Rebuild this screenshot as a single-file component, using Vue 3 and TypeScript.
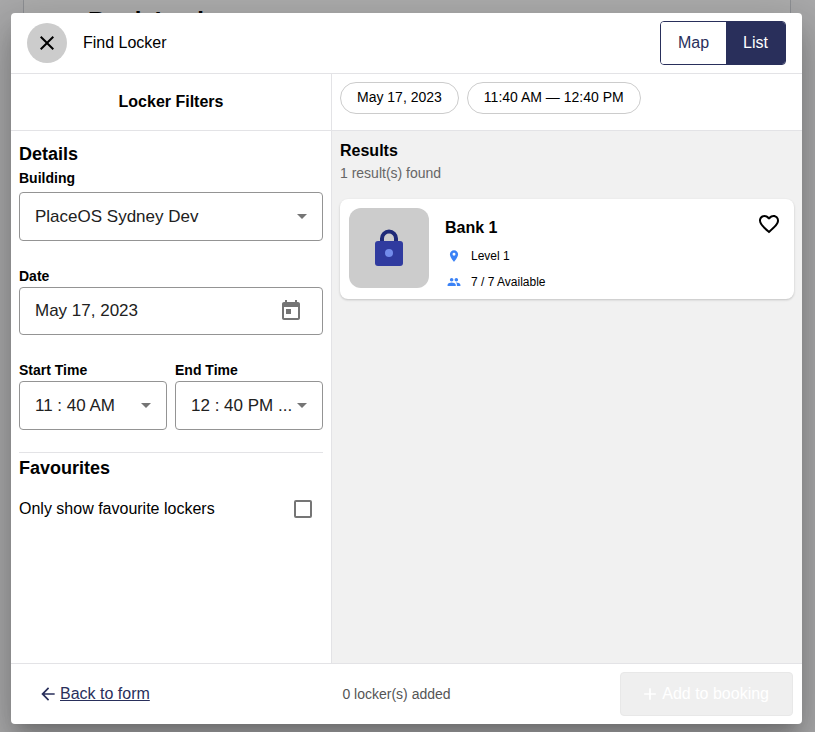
<script setup lang="ts">
import { ref } from 'vue'

interface Bank {
  id: string
  name: string
  level: string
  free: number
  total: number
}

const view = ref<'map' | 'list'>('list')
const building = ref('PlaceOS Sydney Dev')
const date = ref('May 17, 2023')
const start = ref('11 : 40 AM')
const end = ref('12 : 40 PM ...')
const onlyFavourites = ref(false)
const chips = ['May 17, 2023', '11:40 AM — 12:40 PM']
const banks: Bank[] = [{ id: 'bank-1', name: 'Bank 1', level: 'Level 1', free: 7, total: 7 }]
</script>

<template>
  <div class="screen">
    <div class="page" aria-hidden="true">
      <div class="page-title">Book Locker</div>
    </div>
    <div class="backdrop">
      <section class="dialog" role="dialog" aria-labelledby="dialog-title">
        <header class="top">
          <button class="close" type="button" aria-label="Close">
            <svg viewBox="0 0 24 24" width="24" height="24">
              <path d="M19 6.41 17.59 5 12 10.59 6.41 5 5 6.41 10.59 12 5 17.59 6.41 19 12 13.41 17.59 19 19 17.59 13.41 12z" />
            </svg>
          </button>
          <div id="dialog-title" class="title">Find Locker</div>
          <div class="toggle">
            <button type="button" :class="{ active: view === 'map' }" @click="view = 'map'">Map</button>
            <button type="button" :class="{ active: view === 'list' }" @click="view = 'list'">List</button>
          </div>
        </header>

        <main class="body">
          <aside class="filters">
            <h2 class="filters-head">Locker Filters</h2>
            <form class="form" @submit.prevent>
              <h3>Details</h3>
              <div class="group building">
                <label for="building">Building</label>
                <div class="field">
                  <select id="building" v-model="building">
                    <option>PlaceOS Sydney Dev</option>
                  </select>
                  <svg class="arrow" viewBox="0 0 10 5" width="10" height="5"><path d="M0 0h10L5 5z" /></svg>
                </div>
              </div>
              <div class="group">
                <label for="date">Date</label>
                <div class="field date">
                  <input id="date" v-model="date" type="text" readonly />
                  <button class="calendar" type="button" aria-label="Open calendar">
                    <svg viewBox="0 0 24 24" width="24" height="24">
                      <path d="M19 3h-1V1h-2v2H8V1H6v2H5c-1.11 0-1.99.9-1.99 2L3 19c0 1.1.89 2 2 2h14c1.1 0 2-.9 2-2V5c0-1.1-.9-2-2-2zm0 16H5V8h14v11zM7 10h5v5H7z" />
                    </svg>
                  </button>
                </div>
              </div>
              <div class="times">
                <div class="group">
                  <label for="start">Start Time</label>
                  <div class="field">
                    <select id="start" v-model="start">
                      <option>11 : 40 AM</option>
                    </select>
                    <svg class="arrow" viewBox="0 0 10 5" width="10" height="5"><path d="M0 0h10L5 5z" /></svg>
                  </div>
                </div>
                <div class="group">
                  <label for="end">End Time</label>
                  <div class="field">
                    <select id="end" v-model="end">
                      <option>12 : 40 PM ...</option>
                    </select>
                    <svg class="arrow" viewBox="0 0 10 5" width="10" height="5"><path d="M0 0h10L5 5z" /></svg>
                  </div>
                </div>
              </div>
              <div class="favourites">
                <h3>Favourites</h3>
                <div class="check-row">
                  <label for="only-favourites">Only show favourite lockers</label>
                  <input id="only-favourites" v-model="onlyFavourites" type="checkbox" />
                </div>
              </div>
            </form>
          </aside>

          <section class="content">
            <div class="chips">
              <div v-for="chip in chips" :key="chip" class="chip">{{ chip }}</div>
            </div>
            <div class="results">
              <h3 class="results-title">Results</h3>
              <p class="count">{{ banks.length }} result(s) found</p>
              <article v-for="bank in banks" :key="bank.id" class="card">
                <div class="thumb">
                  <svg viewBox="0 0 28 38" width="28" height="38">
                    <path d="M7 15V9.5a7 7 0 0 1 14 0V15" fill="none" stroke="#1f2a78" stroke-width="4" />
                    <rect y="12" width="28" height="25" rx="3" fill="#303b9f" />
                    <circle cx="14" cy="24" r="4" fill="#738ceb" />
                  </svg>
                </div>
                <div class="info">
                  <div class="name">{{ bank.name }}</div>
                  <div class="meta">
                    <svg viewBox="0 0 24 24" width="14" height="14">
                      <path d="M12 2C8.13 2 5 5.13 5 9c0 5.25 7 13 7 13s7-7.75 7-13c0-3.87-3.13-7-7-7zm0 9.5a2.5 2.5 0 0 1 0-5 2.5 2.5 0 0 1 0 5z" />
                    </svg>
                    <span>{{ bank.level }}</span>
                  </div>
                  <div class="meta">
                    <svg viewBox="0 0 24 24" width="14" height="14">
                      <path d="M16 11c1.66 0 2.99-1.34 2.99-3S17.66 5 16 5s-3 1.34-3 3 1.34 3 3 3zm-8 0c1.66 0 2.99-1.34 2.99-3S9.66 5 8 5 5 6.34 5 8s1.34 3 3 3zm0 2c-2.33 0-7 1.17-7 3.5V19h14v-2.5c0-2.33-4.67-3.5-7-3.5zm8 0c-.29 0-.62.02-.97.05 1.16.84 1.97 1.97 1.97 3.45V19h6v-2.5c0-2.33-4.67-3.5-7-3.5z" />
                    </svg>
                    <span>{{ bank.free }} / {{ bank.total }} Available</span>
                  </div>
                </div>
                <button class="heart" type="button" aria-label="Add to favourites">
                  <svg viewBox="0 0 24 24" width="24" height="24">
                    <path d="M16.5 3c-1.74 0-3.41.81-4.5 2.09C10.91 3.81 9.24 3 7.5 3 4.42 3 2 5.42 2 8.5c0 3.78 3.4 6.86 8.55 11.54L12 21.35l1.45-1.32C18.6 15.36 22 12.28 22 8.5 22 5.42 19.58 3 16.5 3zm-4.4 15.55-.1.1-.1-.1C7.14 14.24 4 11.39 4 8.5 4 6.5 5.5 5 7.5 5c1.54 0 3.04.99 3.57 2.36h1.87C13.46 5.99 14.96 5 16.5 5c2 0 3.5 1.5 3.5 3.5 0 2.89-3.14 5.74-7.9 10.05z" />
                  </svg>
                </button>
              </article>
            </div>
          </section>
        </main>

        <footer class="bottom">
          <button class="back" type="button">
            <svg viewBox="0 0 24 24" width="20" height="20">
              <path d="M20 11H7.83l5.59-5.59L12 4l-8 8 8 8 1.41-1.41L7.83 13H20v-2z" />
            </svg>
            <span>Back to form</span>
          </button>
          <p class="added">0 locker(s) added</p>
          <button class="add" type="button" disabled>
            <svg viewBox="0 0 24 24" width="20" height="20"><path d="M19 13h-6v6h-2v-6H5v-2h6V5h2v6h6v2z" /></svg>
            <span>Add to booking</span>
          </button>
        </footer>
      </section>
    </div>
  </div>
</template>

<style>
body {
  margin: 0;
}
</style>

<style scoped>
* {
  box-sizing: border-box;
}

.screen {
  display: grid;
  min-height: 100vh;
  overflow: hidden;
  background: #f9fafb;
  color: #000;
  font-family: "Liberation Sans", Arial, sans-serif;
  font-size: 16px;
}

.page,
.backdrop {
  grid-area: 1 / 1;
}

.page {
  margin: 0 24px 16px 23px;
  padding: 7px 64px;
  background: #fff;
  border: solid #d1d5db;
  border-width: 0 1px;
}

.page-title {
  font-size: 24px;
  font-weight: 700;
  line-height: 28px;
}

.backdrop {
  z-index: 1;
  display: flex;
  padding: 13px 13px 8px 11px;
  background: rgba(0, 0, 0, 0.32);
}

.dialog {
  flex: 1;
  min-width: 0;
  display: flex;
  flex-direction: column;
  overflow: hidden;
  background: #fff;
  border-radius: 4px;
  box-shadow:
    0 11px 15px -7px rgba(0, 0, 0, 0.2),
    0 24px 38px 3px rgba(0, 0, 0, 0.14),
    0 9px 46px 8px rgba(0, 0, 0, 0.12);
}

h2,
h3,
p {
  margin: 0;
}

button,
select,
input {
  margin: 0;
  font-family: inherit;
  color: inherit;
}

button {
  font-size: 16px;
  cursor: pointer;
}

svg {
  display: block;
  flex: none;
  fill: currentColor;
}

.top {
  display: flex;
  align-items: center;
  gap: 16px;
  padding: 8px 16px;
  border-bottom: 1px solid #e3e3e6;
}

.close {
  display: grid;
  place-items: center;
  width: 40px;
  height: 40px;
  padding: 0;
  border: 0;
  border-radius: 50%;
  background: #ccc;
}

.title {
  flex: 1;
}

.toggle {
  display: flex;
  height: 44px;
  border: 1px solid #292f5b;
  border-radius: 4px;
  overflow: hidden;
}

.toggle button {
  padding: 0 17px;
  border: 0;
  background: #fff;
  color: #292f5b;
}

.toggle button.active {
  background: #292f5b;
  color: #fff;
}

.body {
  flex: 1;
  display: grid;
  grid-template-columns: 321px 1fr;
}

.filters {
  border-right: 1px solid #e3e3e6;
}

.filters-head {
  height: 57px;
  border-bottom: 1px solid #e3e3e6;
  font-size: 16px;
  font-weight: 700;
  line-height: 56px;
  text-align: center;
}

.form {
  padding: 8px;
}

.form h3 {
  font-size: 18px;
  font-weight: 700;
  line-height: 30px;
}

.group {
  display: flex;
  flex-direction: column;
  gap: 2px;
  min-width: 0;
  margin-bottom: 26px;
}

.group.building {
  gap: 5px;
}

.group label {
  font-size: 14px;
  font-weight: 700;
  line-height: 18px;
}

.field {
  display: grid;
  align-items: center;
  height: 49px;
  border: 1px solid #949494;
  border-radius: 4px;
  color: #212121;
}

.field.date {
  height: 48px;
}

.field > * {
  grid-area: 1 / 1;
}

.field select,
.field input {
  width: 100%;
  height: 100%;
  padding: 0 26px 0 15px;
  border: 0;
  border-radius: 4px;
  background: transparent;
  font-size: 17px;
  appearance: none;
}

.arrow {
  justify-self: end;
  margin-right: 15px;
  color: #757575;
  pointer-events: none;
}

.calendar {
  justify-self: end;
  margin-right: 19px;
  padding: 0;
  border: 0;
  background: transparent;
  color: #757575;
}

.times {
  display: grid;
  grid-template-columns: 1fr 1fr;
  gap: 8px;
}

.times .group {
  margin-bottom: 22px;
}

.favourites {
  border-top: 1px solid #e3e3e6;
}

.check-row {
  display: flex;
  align-items: center;
  justify-content: space-between;
  height: 40px;
  margin-top: 6px;
  padding-right: 11px;
}

.check-row input {
  width: 18px;
  height: 18px;
  border: 2px solid #757575;
  border-radius: 2px;
  appearance: none;
}

.check-row input:checked {
  background: #292f5b;
}

.content {
  min-width: 0;
  display: flex;
  flex-direction: column;
}

.chips {
  display: flex;
  align-items: flex-start;
  gap: 8px;
  height: 57px;
  padding: 8px;
  border-bottom: 1px solid #e3e3e6;
}

.chip {
  height: 32px;
  padding: 0 16px;
  border: 1px solid #ccc;
  border-radius: 16px;
  font-size: 14px;
  line-height: 28px;
  white-space: nowrap;
}

.results {
  flex: 1;
  padding: 8px;
  background: #f1f1f1;
}

.results-title {
  font-size: 16px;
  line-height: 24px;
}

.count {
  margin-bottom: 16px;
  color: #666;
  font-size: 14px;
  line-height: 20px;
}

.card {
  display: flex;
  align-items: flex-start;
  gap: 16px;
  padding: 9px;
  background: #fff;
  border-radius: 8px;
  box-shadow:
    0 1px 3px rgba(0, 0, 0, 0.1),
    0 1px 2px rgba(0, 0, 0, 0.1);
}

.thumb {
  display: grid;
  place-items: center;
  width: 80px;
  height: 80px;
  border-radius: 12px;
  background: #ccc;
}

.info {
  flex: 1;
  display: flex;
  flex-direction: column;
  gap: 10px;
  padding-top: 10px;
}

.name {
  font-weight: 700;
  line-height: 20px;
}

.meta {
  display: flex;
  align-items: center;
  gap: 10px;
  padding-left: 2px;
  font-size: 12px;
  line-height: 16px;
}

.meta svg {
  color: #3b82f6;
}

.heart {
  margin: 4px;
  padding: 0;
  border: 0;
  background: transparent;
}

.bottom {
  display: flex;
  align-items: center;
  justify-content: space-between;
  padding: 8px 9px 8px 8px;
  border-top: 1px solid #e3e3e6;
}

.back,
.add {
  display: flex;
  align-items: center;
  gap: 2px;
  height: 44px;
  border: 1px solid transparent;
  border-radius: 4px;
  background: transparent;
}

.back {
  padding: 0 22px 0 18px;
  color: #292f5b;
}

.back span {
  text-decoration: underline;
}

.added {
  color: #555;
  font-size: 14px;
}

.add {
  padding: 0 23px 0 19px;
  border-color: #e8e8e8;
  background: #efefef;
  color: #fff;
  cursor: default;
}
</style>
